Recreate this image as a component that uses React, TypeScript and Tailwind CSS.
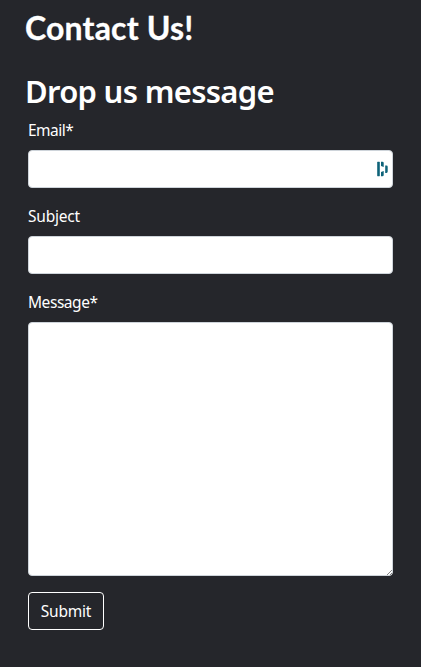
import React from 'react';

const inputClass =
  'block h-[38px] w-full rounded border border-[#ced4da] bg-white px-3 pr-10 text-base text-[#212529] outline-none';

function Label({ htmlFor, className, children }: { htmlFor: string; className: string; children: React.ReactNode }) {
  return (
    <label htmlFor={htmlFor} className={`mb-2 block h-6 text-[15.5px] leading-6 ${className}`}>
      {children}
    </label>
  );
}

export default function App() {
  return (
    <main className="h-[667px] w-full bg-[#25262b] pt-[9px] font-['Noto_Sans','Open_Sans',sans-serif] text-white">
      <h1 className="ml-[25px] h-[38px] whitespace-nowrap font-['Lato',sans-serif] text-[32px] leading-[38px] font-bold tracking-[0.18px] [-webkit-text-stroke:0.3px_white]">Contact Us!</h1>
      <h2 className="mt-[25px] ml-[25px] h-[38px] whitespace-nowrap text-[31px] leading-[38px] font-semibold tracking-[-0.7px]">Drop us message</h2>
      <form className="mt-2 ml-7 w-[365px]" onSubmit={(e) => e.preventDefault()}>
        <div className="mb-4">
          <Label htmlFor="email" className="tracking-[-0.5px]">Email*</Label>
          <div className="relative">
            <input id="email" type="email" className={inputClass} />
            <svg className="absolute top-[11px] right-[4px]" width="12" height="16" viewBox="0 0 12 16" fill="#0e6379">
              <rect x="0.2" y="0.8" width="2.6" height="14.4" rx="0.4" />
              <path d="M4 .8h1.400q1.300 0 1.300 1.300V6L4 5zM4 11l2.700-1v3.900q0 1.300-1.300 1.300H4zM8.200 4.500h1.300q1.200 0 1.200 1.300v4.800q0 1.300-1.200 1.300H8.200z" />
            </svg>
          </div>
        </div>
        <div className="mb-4">
          <Label htmlFor="subject" className="tracking-[-0.2px]">Subject</Label>
          <input id="subject" type="text" className={inputClass} />
        </div>
        <div className="mb-4">
          <Label htmlFor="message" className="tracking-[-0.45px]">Message*</Label>
          <div className="relative">
            <textarea id="message" className="block h-[254px] w-full resize-none rounded border border-[#ced4da] bg-white px-3 py-1.5 text-[#212529] outline-none" />
            <svg className="pointer-events-none absolute right-px bottom-px" width="5" height="5" viewBox="0 0 5 5" stroke="#555" strokeDasharray="1 0.4">
              <path d="M0 5 5 0M3 5l2-2" />
            </svg>
          </div>
        </div>
        <button type="submit" className="h-[38px] w-[76px] rounded border border-white text-[15.5px] leading-6 tracking-[-0.2px]">Submit</button>
      </form>
    </main>
  );
}
